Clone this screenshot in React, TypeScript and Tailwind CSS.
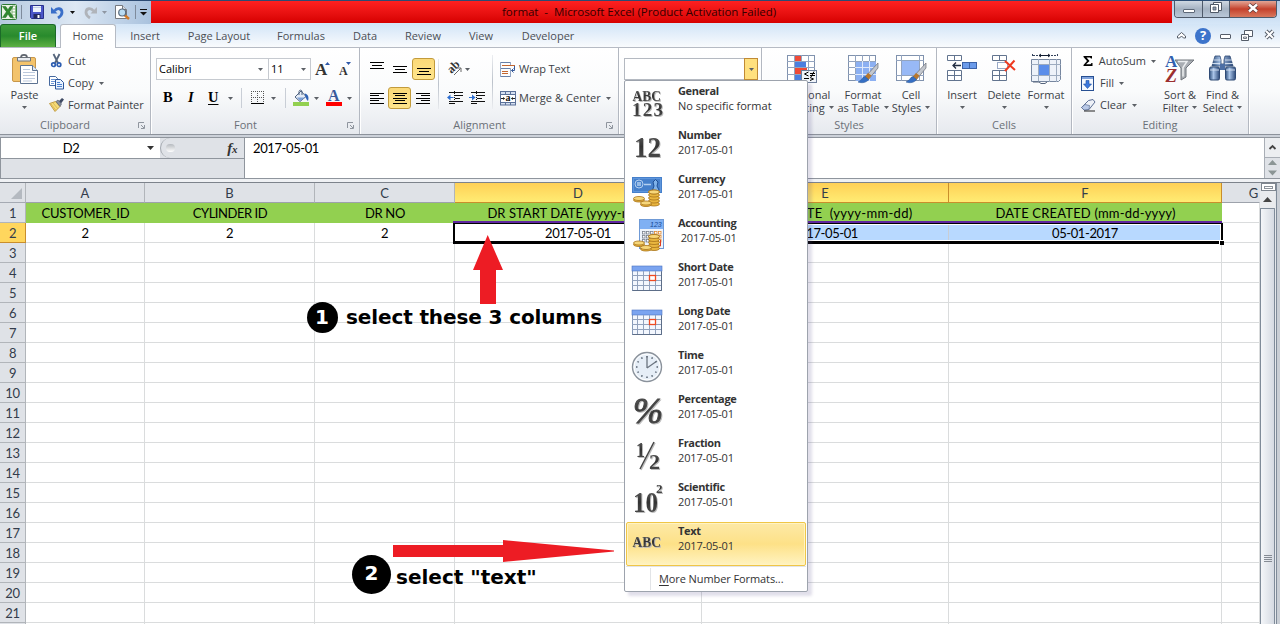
import React from "react";

type IconProps = { children: React.ReactNode; w: number; h: number; className?: string };

const Icon = ({ children, w, h, className = "" }: IconProps) => (
  <svg width={w} height={h} viewBox={`0 0 ${w} ${h}`} className={`block shrink-0 overflow-visible ${className}`}>
    {children}
  </svg>
);

const Arrow = ({ className = "" }: { className?: string }) => (
  <Icon w={5} h={3} className={className}>
    <path d="M0 0h5L2.500 3z" fill="#5c6066" />
  </Icon>
);

const Sep = ({ className = "" }: { className?: string }) => (
  <div className={`h-5 w-px shrink-0 bg-[#c9ced6] ${className}`} />
);

/* ---------- quick access + window icons ---------- */

const ExcelLogo = () => (
  <Icon w={16} h={16}>
    <rect x="0.500" y="0.500" width="15" height="15" rx="1" fill="#e9f3e3" stroke="#2d7a35" />
    <path d="M11 2h3.500v12H11z" fill="#fff" stroke="#5c9e55" strokeWidth="0.700" />
    <path d="M11 5h3.500M11 8h3.500M11 11h3.500" stroke="#5c9e55" strokeWidth="0.700" />
    <path d="M1.500 2.500h3.200L7 5.700l2-3.200h3L8.700 7.700 12.500 13.500H9.200L7 9.900l-2.200 3.600H1.500l3.900-5.800z" fill="#2f8a2c" stroke="#1c6524" strokeWidth="0.500" />
  </Icon>
);

const SaveIcon = () => (
  <Icon w={14} h={14}>
    <path d="M.500.500h13v13h-12l-1-1z" fill="#4a56c8" stroke="#28308c" />
    <rect x="3" y="1" width="8" height="6" fill="#eef3fb" />
    <path d="M3 2.500h8" stroke="#c3cfe4" />
    <rect x="3.500" y="9" width="7" height="4.500" fill="#23295f" />
    <rect x="7.500" y="10" width="2" height="3" fill="#fff" />
  </Icon>
);

const UndoIcon = ({ redo = false }: { redo?: boolean }) => (
  <Icon w={13} h={13}>
    <g transform={redo ? "translate(13 0) scale(-1 1)" : undefined}>
      <path
        d="M3.500 5C6 1.500 11 2 11 6.500c0 2.500-1.700 4-4 5.500"
        fill="none"
        stroke={redo ? "#b0b4ba" : "#3a6fc9"}
        strokeWidth="2.800"
      />
      <path d="M0 1v6.500h6.500z" fill={redo ? "#b0b4ba" : "#3a6fc9"} />
    </g>
  </Icon>
);

const PreviewIcon = () => (
  <Icon w={15} h={15}>
    <path d="M.500.500h7l4 4v9H.500z" fill="#fff" stroke="#75797f" />
    <path d="M7.500.500v4h4" fill="#dbe0e8" stroke="#75797f" />
    <path d="M9.500 10l4.500 4" stroke="#d27a26" strokeWidth="2.500" />
    <circle cx="7.200" cy="7.500" r="3.500" fill="#b9dcf3" stroke="#5a6a7c" strokeWidth="1.200" />
  </Icon>
);

/* ---------- ribbon icons ---------- */

const PasteIcon = () => (
  <Icon w={27} h={31}>
    <rect x="0.500" y="3.500" width="23" height="24" rx="1.500" fill="#f3c36c" stroke="#c8974a" />
    <path d="M5.500 3.500h13V7h-13z" fill="#e8ebef" stroke="#6e747c" />
    <path d="M9 3.500C9 0 15 0 15 3.500" fill="none" stroke="#5f656e" strokeWidth="1.700" />
    <path d="M8.500 11.500h12l5 5v13h-17z" fill="#fff" stroke="#5c7291" />
    <path d="M20.500 11.500v5h5" fill="#dfe8f4" stroke="#5c7291" />
    <path d="M11 15.500h7M11 18.500h12M11 21.500h12M11 24.500h12M11 27h9" stroke="#bcc9dc" />
  </Icon>
);

const CutIcon = () => (
  <Icon w={12} h={14}>
    <path d="M2.500 0L7 9M8.500 0L4 9" stroke="#55657c" strokeWidth="1.800" />
    <circle cx="2.500" cy="10.700" r="1.800" fill="none" stroke="#2c5db0" strokeWidth="1.700" />
    <circle cx="8" cy="10.700" r="1.800" fill="none" stroke="#2c5db0" strokeWidth="1.700" />
  </Icon>
);

const CopyIcon = () => (
  <Icon w={15} h={14}>
    <path d="M.500.500h6l2 2v7h-8z" fill="#fff" stroke="#46699f" />
    <path d="M2 3.500h4M2 5.500h4M2 7.500h3" stroke="#6b94d4" />
    <path d="M6.500 3.500h5l3 3v6.500h-8z" fill="#eaf2fd" stroke="#2d569a" />
    <path d="M8 6.500h3M8 8.500h5M8 10.500h5" stroke="#4d82d0" />
  </Icon>
);

const BrushIcon = () => (
  <Icon w={15} h={14}>
    <path d="M0.500 5.500L6.500 3.500l4.500 5L6 13.500z" fill="#f5dc7a" stroke="#b58a2b" strokeWidth="0.800" />
    <path d="M2 6l5 6.500M4 5l5 6" stroke="#d8b04a" strokeWidth="0.800" />
    <path d="M7 3.500l2-1.500 3.500 4-1.500 2.500z" fill="#8b93a3" stroke="#4b5263" strokeWidth="0.600" />
    <path d="M10 3L13 0l2 1.500L12 5.500z" fill="#3f4a63" />
  </Icon>
);

const GrowFont = ({ shrink = false }: { shrink?: boolean }) => (
  <Icon w={14} h={14}>
    <text x={shrink ? 0 : -1} y="13" fontFamily="Liberation Serif, serif" fontWeight="bold" fontSize={shrink ? 12 : 17} fill="#333">
      A
    </text>
    {shrink ? <path d="M7 0h5L9.500 3z" fill="#2e58a8" /> : <path d="M9 3h5L11.500 0z" fill="#2e58a8" />}
  </Icon>
);

const BorderIcon = () => (
  <Icon w={13} h={14}>
    <path d="M0 .500h13M0 6.500h13M.500 0v12M6.500 0v12M12.500 0v12" stroke="#555" strokeDasharray="1 1" />
    <path d="M0 12.500h13" stroke="#000" />
  </Icon>
);

const BucketIcon = () => (
  <Icon w={16} h={16}>
    <path d="M2 7L8 1l5 5.500-6 5z" fill="#e4ecf7" stroke="#4f6280" />
    <path d="M4 7.500h8L7.300 11z" fill="#7ca0d8" />
    <path d="M6 5V1.500c0-1.800 3-1.800 3 0V5" fill="none" stroke="#4f6280" />
    <path d="M11.500 3.500c4 .500 4.500 4 3.500 7.500-1.500-1-2.500-4-3.500-7.500z" fill="#2f62b5" />
    <rect y="12" width="16" height="4" fill="#92d050" />
  </Icon>
);

const FontColorIcon = () => (
  <Icon w={16} h={16}>
    <text x="2" y="11" fontFamily="Liberation Serif, serif" fontWeight="bold" fontSize="16" fill="#3a5b9b">
      A
    </text>
    <rect y="12" width="16" height="4" fill="#f00" />
  </Icon>
);

const Lines = ({ kind }: { kind: "top" | "middle" | "bottom" | "left" | "center" | "right" }) => {
  const bars: [number, number, number][] = {
    top: [[0, 0, 14], [2, 3, 10], [0, 6, 14]],
    middle: [[0, 4, 14], [2, 7, 10], [0, 10, 14]],
    bottom: [[0, 7, 14], [2, 10, 10], [0, 13, 14]],
    left: [[0, 0, 14], [0, 2, 9], [0, 5, 14], [0, 7, 9], [0, 10, 14]],
    center: [[0, 0, 14], [2, 2, 10], [0, 5, 14], [2, 7, 10], [0, 10, 14]],
    right: [[0, 0, 14], [5, 2, 9], [0, 5, 14], [5, 7, 9], [0, 10, 14]],
  }[kind] as [number, number, number][];
  return (
    <Icon w={14} h={14}>
      {bars.map(([x, y, w]) => (
        <rect key={y} x={x} y={y} width={w} height="1" fill="#000" />
      ))}
    </Icon>
  );
};

const OrientIcon = () => (
  <Icon w={15} h={14}>
    <text x="0" y="0" transform="translate(4.500 12) rotate(-45)" fontFamily="Liberation Serif, serif" fontWeight="bold" fontSize="12" fill="#333">
      ab
    </text>
    <path d="M7 13L13.500 6.500M14 6v4M14 6h-4" stroke="#666" fill="none" />
  </Icon>
);

const IndentIcon = ({ inc = false }: { inc?: boolean }) => (
  <Icon w={16} h={14}>
    <path d="M2 1.500h14M8 4.500h8M8 7.500h5M2 10.500h14M2 12.500h5" stroke="#111" strokeWidth="1.200" />
    <path d="M7.500 0v14" stroke="#111" strokeDasharray="1 1" />
    <path d={inc ? "M0 6h3V3.500L6.500 6.500 3 9.500V7H0z" : "M6.500 6h-3V3.500L0 6.500l3.500 3V7h3z"} fill="#2f6fd0" />
  </Icon>
);

const WrapIcon = () => (
  <Icon w={16} h={15}>
    <path d="M0 .500h11M0 6.500h11M0 14.500h11" stroke="#6780a8" />
    <path d="M.500 0v15M10.500 0v3M10.500 6v9" stroke="#93a6c4" />
    <path d="M2 3.500h13M2 9.500h6M2 11.500h6" stroke="#c4662f" strokeWidth="1.200" />
    <path d="M14.500 4v4.500h-3M13.500 6.500l-2 2 2 2" stroke="#355a9a" fill="none" />
  </Icon>
);

const MergeIcon = () => (
  <Icon w={16} h={15}>
    <rect x="0.500" y="0.500" width="15" height="13.500" fill="#d5e0f1" stroke="#5b7199" />
    <path d="M0 3.500h16M0 11.500h16M5.500 0v3M10.500 0v3M5.500 11v3M10.500 11v3" stroke="#5b7199" />
    <rect x="1" y="4" width="14" height="7" fill="#fff" />
    <path d="M1 7.500h3.500M15 7.500h-3.500" stroke="#222" />
    <path d="M3 6v3l2-1.500zM13 6v3l-2-1.500z" fill="#222" />
    <text x="5.600" y="10.300" fontFamily="Liberation Serif, serif" fontWeight="bold" fontSize="10" fill="#111">
      a
    </text>
  </Icon>
);

const GridBase = () => (
  <>
    <rect x="0.500" y="0.500" width="27" height="25" fill="#fff" stroke="#8092ae" />
    <path d="M0 6.500h28M0 12.500h28M0 19.500h28M7.500 0v26M14.500 0v26M21.500 0v26" stroke="#93a4bf" />
  </>
);

const CondIcon = () => (
  <Icon w={29} h={29}>
    <GridBase />
    <rect x="8" y="1" width="6" height="5" fill="#ef4a37" />
    <rect x="8" y="7" width="11" height="5" fill="#4b7fe0" />
    <rect x="8" y="13" width="12" height="6" fill="#ef4a37" />
    <rect x="8" y="20" width="6" height="5" fill="#4b7fe0" />
    <rect x="14.500" y="15.500" width="15" height="12" fill="#f1f5fb" stroke="#6e7f9b" />
    <path d="M21.500 17l-4 2 4 2M17 23.500h5M23 18.500h5M23 20.500h5M27 16.500l-3 5.500M23 22.500l3.500 1.500-3.500 1.500" stroke="#000" fill="none" />
  </Icon>
);

const PaintBrush = () => (
  <>
    <path d="M30 8L17 22l3.500 2.500L30 13z" fill="#c3c7ce" stroke="#686d76" strokeWidth="0.700" />
    <path d="M20 18l-3 3.500 3.500 3 3-4z" fill="#b8772d" />
    <path d="M17 21.500c-3 .500-3 4-7 5.500 4 1.500 9 .500 10.500-2.500z" fill="#356fc4" stroke="#23508f" strokeWidth="0.500" />
  </>
);

const FormatTableIcon = () => (
  <Icon w={30} h={29}>
    <GridBase />
    <rect x="8" y="7" width="20" height="19" fill="#8cb0f2" />
    <path d="M7 12.500h21M7 19.500h21M14.500 6v20M21.500 6v20" stroke="#dfe9fa" />
    <PaintBrush />
  </Icon>
);

const CellStylesIcon = () => (
  <Icon w={30} h={29}>
    <rect x="0.500" y="0.500" width="27" height="25" fill="#fff" stroke="#8092ae" />
    <path d="M0 5.500h28M0 20.500h28M5.500 0v26M23.500 0v26" stroke="#93a4bf" />
    <rect x="6" y="6" width="17" height="14" fill="#98b9f6" />
    <PaintBrush />
  </Icon>
);

const InsertIcon = () => (
  <Icon w={30} h={27}>
    <g fill="#fff" stroke="#62748f">
      <path d="M.500.500h14v5H.500zM7.500.500v5M.500 15.500h14v10H.500zM.500 20.500h14M7.500 15.500v10" />
      <rect x="15.500" y="7.500" width="14" height="6" fill="#6b9bea" stroke="#3b62a8" />
      <path d="M22.500 7.500v6" stroke="#3b62a8" />
    </g>
    <path d="M6 10.500h8M9 7.500l-3 3 3 3" stroke="#222d42" fill="none" strokeWidth="1.300" />
  </Icon>
);

const DeleteIcon = () => (
  <Icon w={25} h={27}>
    <g fill="#fff" stroke="#62748f">
      <path d="M.500.500h14v5H.500zM7.500.500v5M.500 15.500h14v10H.500zM.500 20.500h14M7.500 15.500v10" />
      <rect x="5.500" y="7.500" width="10" height="6" strokeDasharray="1 1" stroke="#35558f" />
    </g>
    <path d="M13 6l10 9M22.500 5.500L13 16" stroke="#ee3a20" strokeWidth="2" />
  </Icon>
);

const FormatCellsIcon = () => (
  <Icon w={31} h={30}>
    <path d="M1.500 0v3M26.500 0v3M2 1.500h25" stroke="#34435c" strokeDasharray="2 1" />
    <path d="M8 1.500h11M10 0L8 1.500l2 1.500M17 0l2 1.500-2 1.500" stroke="#111c30" fill="none" />
    <path d="M.500 5.500h29v20l-2 2H.500z" fill="#edf2f9" stroke="#76869f" />
    <path d="M0 10.500h30M0 21.500h30M7.500 5v23M18.500 5v23M25.500 5v23" stroke="#9cabbf" />
    <rect x="8" y="11" width="10" height="10" fill="#5b8eea" />
    <path d="M2 28h6l2 1.500h4l2-1.500" stroke="#56657d" fill="none" />
  </Icon>
);

const SigmaIcon = () => (
  <Icon w={10} h={10}>
    <path d="M.500 0h8.500v2.500H8L7 1.500H3.500L6.500 5l-3.500 3.300h4.500l1-1.300h1V10H.500V9L4 5 .500 1z" fill="#000" />
  </Icon>
);

const FillIcon = () => (
  <Icon w={13} h={15}>
    <rect x="0.500" y="0.500" width="12" height="14" fill="#f5f9ff" stroke="#274f92" />
    <path d="M1 2h11" stroke="#7fa2dc" strokeWidth="2" />
    <path d="M5 4.500h3V8h2.500l-4 4.500-4-4.500H5z" fill="#3c78de" stroke="#1d4f9e" strokeWidth="0.600" />
  </Icon>
);

const EraserIcon = () => (
  <Icon w={15} h={13}>
    <path d="M.500 8.500L7.500 1.500 12 .500 14 3 8 10.500l-5 .500z" fill="#eef1f7" stroke="#5c6f94" />
    <path d="M.500 8.500L4 5.500l4.500 1-.500 4-5 .500z" fill="#b9c9e8" stroke="#5c6f94" strokeWidth="0.700" />
    <path d="M3 12h11" stroke="#222" />
  </Icon>
);

const SortIcon = () => (
  <Icon w={30} h={30}>
    <path d="M10 6h19l-8 8v9l-5 3V14z" fill="#a9adb3" stroke="#71767d" />
    <path d="M13 7.500h9l-4 6v9" fill="none" stroke="#eceef0" strokeWidth="1.500" />
    <text x="0" y="13" fontFamily="Liberation Serif, serif" fontWeight="bold" fontSize="17" fill="#315fae">
      A
    </text>
    <text x="0.500" y="28" fontFamily="Liberation Serif, serif" fontWeight="bold" fontStyle="italic" fontSize="19" fill="#9b2f30">
      Z
    </text>
  </Icon>
);

const BinocularsIcon = () => (
  <Icon w={28} h={26}>
    <defs>
      <linearGradient id="bino" x1="0" x2="1" y1="0" y2="0">
        <stop offset="0" stopColor="#31527f" />
        <stop offset=".4" stopColor="#a9c4e8" />
        <stop offset="1" stopColor="#2e4b7a" />
      </linearGradient>
    </defs>
    <path d="M6 1h5l1 4v4h3V5l1-4h5l3 10H3z" fill="url(#bino)" stroke="#2f4a75" strokeWidth="0.800" />
    <rect x="0.500" y="12" width="10" height="13" rx="1.500" fill="url(#bino)" stroke="#2f4a75" />
    <rect x="16.500" y="12" width="10" height="13" rx="1.500" fill="url(#bino)" stroke="#2f4a75" />
    <rect x="11" y="9" width="5" height="6" fill="#4d6fa5" />
    <path d="M4.500 5h7M16 5h7M3 8.500h8M16 8.500h8M1 15h9M17 15h9" stroke="#dbe6f5" strokeWidth="0.900" />
  </Icon>
);

/* ---------- ribbon building blocks ---------- */

const Launcher = () => (
  <Icon w={7} h={7} className="absolute right-[5px] top-[4px]">
    <path d="M.500 6V.500H6M3 3l3 3M6.500 3v3.500H3" stroke="#8f959e" fill="none" />
  </Icon>
);

type GroupProps = { title: string; className: string; launcher?: boolean; children?: React.ReactNode; titleClass?: string };
const Group = ({ title, className, launcher, children, titleClass = "" }: GroupProps) => (
  <section className={`flex h-[86px] shrink-0 flex-col border-r border-[#b3b8c1] shadow-[1px_0_0_#fff] ${className}`}>
    <div className="flex h-[70px]">{children}</div>
    <div className={`relative h-4 text-center leading-[14px] text-[#6a7077] ${titleClass}`}>
      {title}
      {launcher && <Launcher />}
    </div>
  </section>
);

type BigProps = { icon: React.ReactNode; l1: string; l2?: string; className: string };
const Big = ({ icon, l1, l2, className }: BigProps) => (
  <div className={`flex shrink-0 flex-col items-center whitespace-nowrap leading-[13px] ${className}`}>
    <div className="flex h-[40px] pt-[7px]">{icon}</div>
    <div>{l1}</div>
    <div className="flex h-[13px] items-center gap-[4px]">
      {l2}
      <Arrow />
    </div>
  </div>
);

const Small = ({ icon, label, arrow }: { icon: React.ReactNode; label: string; arrow?: boolean }) => (
  <div className="flex h-[22px] items-center whitespace-nowrap">
    <div className="flex w-[19px] justify-start">{icon}</div>
    {label}
    {arrow && <Arrow className="ml-[5px]" />}
  </div>
);

const activeBtn =
  "flex h-[22px] w-[23px] shrink-0 items-center justify-center rounded-[3px] border border-[#c29b3c] bg-linear-to-b from-[#fbd978] to-[#ffe58b]";

/* ---------- number format menu ---------- */

const Glyph = ({ children }: { children: React.ReactNode }) => (
  <Icon w={32} h={34}>
    <defs>
      <linearGradient id="ink" x1="0" x2="0" y1="0" y2="1">
        <stop offset="0" stopColor="#6a6a6a" />
        <stop offset=".5" stopColor="#333" />
        <stop offset="1" stopColor="#555" />
      </linearGradient>
    </defs>
    <g fill="url(#ink)" fontFamily="Liberation Serif, serif" fontWeight="bold" className="drop-shadow-[1px_1px_0.500px_#bbb]">
      {children}
    </g>
  </Icon>
);

const Coins = ({ x, y }: { x: number; y: number }) => (
  <g transform={`translate(${x} ${y})`} fill="#e9b63f" stroke="#a8741a" strokeWidth="0.800">
    {[12, 9, 6, 3, 0].map((d) => (
      <ellipse key={d} cx="22" cy={d + 1.5} rx="5.500" ry="2" />
    ))}
    <ellipse cx="7" cy="9.500" rx="5.500" ry="2" />
    <ellipse cx="7" cy="8" rx="5.500" ry="2" fill="#f7d77a" />
    <ellipse cx="14" cy="14" rx="5.500" ry="2" />
    <ellipse cx="14" cy="12.500" rx="5.500" ry="2" fill="#f7d77a" />
    <ellipse cx="22" cy="1.500" rx="5.500" ry="2" fill="#f7d77a" />
  </g>
);

const CurrencyIcon = () => (
  <Icon w={32} h={34}>
    <rect x="0" y="5" width="30" height="16" fill="#4680cb" />
    <rect x="1.500" y="6.500" width="27" height="13" fill="none" stroke="#5f96dc" />
    <circle cx="7" cy="12" r="4" fill="none" stroke="#b4d0f0" />
    <path d="M6 10v4M8 10v4M12 12.500h7" stroke="#b4d0f0" strokeWidth="1.500" />
    <path d="M20.500 18l1.500-4-1-4 2.500-2.500L26 10l-1 4 2 4" fill="#7fb2ea" stroke="#1f4f96" />
    <Coins x={0} y={18.5} />
  </Icon>
);

const AccountingIcon = () => (
  <Icon w={32} h={34} className="mt-[2px]">
    <rect x="7.500" y="1.500" width="24" height="29" fill="#eef4fc" stroke="#6f9ad6" />
    <rect x="8" y="2" width="23" height="9" fill="#7fb0f3" />
    <text x="18" y="9" fontFamily="Liberation Sans, sans-serif" fontStyle="italic" fontSize="7" fill="#174a96">
      123
    </text>
    <g fill="#fff" stroke="#7a828e" strokeWidth="0.800">
      {[13.5, 17.5, 21.5].map((y) =>
        [10.5, 14.5, 18.5, 22.5, 26.5].map((x) => (
          <rect key={`${x}-${y}`} x={x} y={y} width="2.500" height="2.500" stroke={x > 20 ? "#e08a30" : "#7a828e"} />
        ))
      )}
    </g>
    <path d="M28.500 22v6h-3" stroke="#e03c20" fill="none" />
    <Coins x={0} y={17} />
  </Icon>
);

const CalendarIcon = () => (
  <Icon w={32} h={34}>
    <rect x="0.500" y="6.500" width="29" height="24" fill="#f3f7fe" stroke="#8599b8" />
    <rect x="0" y="6" width="30" height="5" fill="#7ba4f0" stroke="#4a72c0" strokeWidth="0.600" />
    <path d="M0 15.500h30M0 20.500h30M0 25.500h30M5.500 11v19M11.500 11v19M17.500 11v19M23.500 11v19" stroke="#92a2bd" />
    <rect x="17.500" y="15.500" width="6" height="5" fill="#fff" stroke="#ee4a22" strokeWidth="1.300" />
    <path d="M.500 30.500h29v-19" stroke="#5d6e88" fill="none" />
  </Icon>
);

const ClockIcon = () => (
  <Icon w={32} h={34}>
    <circle cx="15" cy="19" r="14.500" fill="#e6eef7" stroke="#8b929b" strokeWidth="1.400" />
    <circle cx="15" cy="19" r="13" fill="none" stroke="#fff" />
    {[0, 30, 60, 90, 120, 150, 180, 210, 240, 270, 300, 330].map((a) => (
      <rect key={a} x="14.300" y="8" width="1.400" height="1.500" fill="#4d5866" transform={`rotate(${a} 15 19)`} />
    ))}
    <path d="M15 8v12M15 20l10-7" stroke="#6c7580" strokeWidth="1.300" />
  </Icon>
);

const formats: { name: string; sample: string; icon: React.ReactNode }[] = [
  {
    name: "General",
    sample: "No specific format",
    icon: (
      <Glyph>
        <text x="0.500" y="17" fontSize="15" textLength="28.500" lengthAdjust="spacingAndGlyphs">ABC</text>
        <text x="0" y="31.500" fontSize="19" textLength="31">123</text>
      </Glyph>
    ),
  },
  { name: "Number", sample: "2017-05-01", icon: <Glyph><text x="2" y="29" fontSize="30" textLength="27" lengthAdjust="spacingAndGlyphs">12</text></Glyph> },
  { name: "Currency", sample: "2017-05-01", icon: <CurrencyIcon /> },
  { name: "Accounting", sample: "\u00a02017-05-01", icon: <AccountingIcon /> },
  { name: "Short Date", sample: "2017-05-01", icon: <CalendarIcon /> },
  { name: "Long Date", sample: "2017-05-01", icon: <CalendarIcon /> },
  { name: "Time", sample: "2017-05-01", icon: <ClockIcon /> },
  {
    name: "Percentage",
    sample: "2017-05-01",
    icon: (
      <Glyph>
        <text x="1" y="31" fontSize="35" fontWeight="normal" fontStyle="italic" stroke="#444" strokeWidth="0.900" textLength="30" lengthAdjust="spacingAndGlyphs">
          %
        </text>
      </Glyph>
    ),
  },
  {
    name: "Fraction",
    sample: "2017-05-01",
    icon: (
      <Glyph>
        <text x="4" y="20.500" fontSize="21" textLength="9" lengthAdjust="spacingAndGlyphs">1</text>
        <text x="17" y="33" fontSize="22">2</text>
        <path d="M22 6L8 33" stroke="#444" strokeWidth="1.500" />
      </Glyph>
    ),
  },
  {
    name: "Scientific",
    sample: "2017-05-01",
    icon: (
      <Glyph>
        <text x="1" y="32" fontSize="29" textLength="25" lengthAdjust="spacingAndGlyphs">10</text>
        <text x="24" y="13" fontSize="13">2</text>
      </Glyph>
    ),
  },
  { name: "Text", sample: "2017-05-01", icon: <Glyph><text x="0.500" y="22.500" fontSize="15" textLength="28.500" lengthAdjust="spacingAndGlyphs">ABC</text></Glyph> },
];

const FormatMenu = () => (
  <div className="absolute left-[624px] top-[80px] flex h-[512px] w-[184px] flex-col rounded-[2px] border border-[#9da3ad] bg-white px-px pt-px text-[#333] shadow-[4px_4px_3px_rgba(90,80,140,0.18)]">
    {formats.map((f) => (
      <div
        key={f.name}
        className={
          f.name === "Text"
            ? "flex h-[44px] rounded-[2px] border border-[#f0c646] bg-linear-to-b from-[#fde9a6] via-[#fde187] to-[#fff3c0] pl-[5px] shadow-[inset_0_0_0_1px_#fff3c4]"
            : "flex h-[44px] border border-transparent pl-[5px]"
        }
      >
        <div className="w-[46px] pt-px">{f.icon}</div>
        <div className="whitespace-pre leading-[15px]">
          <div className="font-bold tracking-[-0.350px]">{f.name}</div>
          <div className={f.name === "General" ? "" : "tracking-[-0.150px]"}>{f.sample}</div>
        </div>
      </div>
    ))}
    <div className="flex h-[24px] border-t border-[#e2e4e7]">
      <div className="mt-px w-[25px] border-r border-[#e2e4e7]" />
      <div className="pl-[8px] pt-px leading-[22px] tracking-[-0.090px]">
        <span className="underline underline-offset-2">M</span>ore Number Formats...
      </div>
    </div>
  </div>
);

/* ---------- sheet ---------- */

const columns: { id: string; w: string; head: React.ReactNode; value: string; track: string }[] = [
  { id: "A", w: "w-[119px]", head: "CUSTOMER_ID", value: "2", track: "tracking-[-0.200px]" },
  { id: "B", w: "w-[170px]", head: "CYLINDER ID", value: "2", track: "tracking-[-0.450px]" },
  { id: "C", w: "w-[140px]", head: "DR NO", value: "2", track: "tracking-[-0.300px]" },
  {
    id: "D",
    w: "w-[247px]",
    head: (
      <>
        DR START DATE (yyyy-<span className="tracking-[0.600px]">mm-dd)</span>
      </>
    ),
    value: "2017-05-01",
    track: "tracking-[0.040px]",
  },
  {
    id: "E",
    w: "w-[247px]",
    head: (
      <>
        DR END DA<span className="tracking-[0.300px]">TE  (yyyy-mm-dd)</span>
      </>
    ),
    value: "2017-05-01",
    track: "tracking-[-0.250px]",
  },
  { id: "F", w: "w-[273px]", head: "DATE CREATED (mm-dd-yyyy)", value: "05-01-2017", track: "tracking-[0.180px]" },
  { id: "G", w: "w-[38px]", head: "", value: "", track: "" },
];
const isSelected = (id: string) => id === "D" || id === "E" || id === "F";

const Sheet = () => (
  <div className="relative w-[1260px] shrink-0 overflow-hidden font-[Lato,sans-serif] text-[13px] text-black">
    <div className="flex h-[20px] text-[#333c4b]">
      <div className="flex w-[26px] shrink-0 items-end justify-end border-b border-r border-b-[#a5aab3] border-r-[#b1b5ba] bg-[#dfe2e7] p-[3px]">
        <Icon w={11} h={11}>
          <path d="M11 0v11H0z" fill="#b4b9c0" />
        </Icon>
      </div>
      {columns.map((c) => (
        <div
          key={c.id}
          className={`shrink-0 border-b border-r text-center leading-[20px] ${c.w} ${
            isSelected(c.id)
              ? "border-[#c98e2c] bg-linear-to-b from-[#ffd056] to-[#ffec73]"
              : c.id === "G"
                ? "border-b-[#9da2ab] border-r-transparent bg-[#dfe2e7] pl-[26px]"
                : "border-b-[#9da2ab] border-r-[#b1b5ba] bg-[#dfe2e7]"
          }`}
        >
          {c.id}
        </div>
      ))}
    </div>
    {Array.from({ length: 22 }, (_, r) => (
      <div key={r} className="flex h-[20px]">
        <div
          className={`w-[26px] shrink-0 border-b border-r text-center leading-[20px] tracking-[-0.300px] text-[#333c4b] ${
            r === 1 ? "border-[#c98e2c] bg-[#ffd65d]" : "border-[#b1b5ba] bg-[#dfe2e7]"
          }`}
        >
          {r < 21 ? r + 1 : ""}
        </div>
        {columns.map((c) => (
          <div
            key={c.id}
            className={`shrink-0 overflow-hidden whitespace-pre text-center leading-[21px] ${c.w} ${
              r === 0 && c.id !== "G"
                ? "bg-[#92d050]"
                : r === 1 && (c.id === "E" || c.id === "F")
                  ? "border-b border-r border-[#c9cdd3] bg-[#b8d9ff]"
                  : "border-b border-r border-[#dadcdd]"
            } ${r === 0 ? c.track : "tracking-[-0.400px]"}`}
          >
            {r === 0 ? c.head : r === 1 ? c.value : ""}
          </div>
        ))}
      </div>
    ))}
    <div className="absolute left-[453px] top-[38px] h-[2px] w-[769px] bg-[#5f26a0]" />
    <div className="absolute left-[453px] top-[40px] h-[21px] w-[770px] border-2 border-b-3 border-t-1 border-black" />
    <div className="absolute left-[455px] top-[41px] h-[17px] w-[766px] border border-white" />
    <div className="absolute left-[1219px] top-[57px] h-[5px] w-[5px] border-l border-t border-white bg-black" />
  </div>
);

const Steps = () => (
  <>
    <svg className="absolute left-[472px] top-[235px]" width="32" height="70" viewBox="0 0 32 70">
      <path d="M15.700 0L31 35h-7v34H8V35H1z" fill="#ed1c24" />
    </svg>
    <div className="absolute left-[307px] top-[302px] flex h-[31px] w-[31px] items-center justify-center rounded-full bg-black pb-[2px] pr-px font-['DejaVu_Sans',sans-serif] text-[20px] font-bold leading-none text-white">
      1
    </div>
    <div className="absolute left-[346px] top-[304px] whitespace-nowrap font-['DejaVu_Sans',sans-serif] text-[20px] font-bold leading-[26px] tracking-[-0.120px] text-black">
      select these 3 columns
    </div>
    <svg className="absolute left-[393px] top-[540px]" width="222" height="22" viewBox="0 0 222 22">
      <path d="M0 5h110V0l111 10.500v1L110 22v-5H0z" fill="#ed1c24" />
    </svg>
    <div className="absolute left-[352px] top-[555px] flex h-[39px] w-[39px] items-center justify-center rounded-full bg-black pb-[3px] font-['DejaVu_Sans',sans-serif] text-[20px] font-bold leading-none text-white">
      2
    </div>
    <div className="absolute left-[396px] top-[564px] whitespace-nowrap font-['DejaVu_Sans',sans-serif] text-[20px] font-bold leading-[26px] text-black">
      select "text"
    </div>
  </>
);

/* ---------- page ---------- */

const TitleBar = () => (
  <header className="flex h-[24px] border-t border-[#2c4b73] bg-linear-to-b from-[#b3cae6] to-[#d6e7f8]">
    <div className="flex w-[151px] shrink-0 items-center bg-linear-to-r from-[#b5c9df] via-[#dde8f4] to-[#a9c2de] pb-px pl-px">
      <ExcelLogo />
      <div className="ml-[4px] mr-[8px] h-[14px] w-px bg-[#7e8b9c]" />
      <SaveIcon />
      <div className="ml-[7px]"><UndoIcon /></div>
      <Icon w={5} h={3} className="ml-[6px] mr-[9px]"><path d="M0 0h5L2.500 3z" fill="#111" /></Icon>
      <UndoIcon redo />
      <Icon w={5} h={3} className="ml-[5px] mr-[8px]"><path d="M0 0h5L2.500 3z" fill="#8e96a2" /></Icon>
      <PreviewIcon />
      <div className="ml-[5px] mr-[4px] h-[14px] w-px shrink-0 bg-[#7e8b9c]" />
      <Icon w={7} h={7}><path d="M0 .500h7" stroke="#111" /><path d="M0 3h7L3.500 6.500z" fill="#111" /></Icon>
    </div>
    <div className="h-[22px] w-[1021px] shrink-0 whitespace-pre bg-linear-to-b from-[#ff2020] to-[#d60000] text-[11.500px] leading-[21px] text-[#300]">
      <span className="block pl-[351px] tracking-[-0.030px]">format  -  Microsoft Excel (Product Activation Failed)</span>
    </div>
    <div className="ml-[2px] flex h-[17px] w-[103px] overflow-hidden rounded-b-[4px] border border-t-0 border-[#4e5a6a]">
      <div className="flex w-[28px] items-center justify-center border-r border-[#4e5a6a] bg-linear-to-b from-[#cfd8e2] via-[#a5b2c2] to-[#b9c7d8]">
        <div className="mt-[3px] h-[4px] w-[12px] rounded-[1px] border border-[#5d6878] bg-white" />
      </div>
      <div className="flex w-[27px] items-center justify-center border-r border-[#4e5a6a] bg-linear-to-b from-[#cfd8e2] via-[#a5b2c2] to-[#b9c7d8] pb-[4px]">
        <Icon w={12} h={11}>
          <path d="M3.500.500h8v8h-8z" fill="#fff" stroke="#4f5967" />
          <path d="M.500 2.500h8v8h-8z" fill="#fff" stroke="#4f5967" />
          <path d="M3 5h3v3H3z" fill="#8d9aab" stroke="#4f5967" strokeWidth="0.800" />
        </Icon>
      </div>
      <div className="flex flex-1 items-center justify-center bg-linear-to-b from-[#e2a596] via-[#c4402c] to-[#d8765c] pb-[2px]">
        <Icon w={12} h={10}>
          <path d="M2 1.500l8 7M10 1.500l-8 7" stroke="#5d3b3b" strokeWidth="4" />
          <path d="M2 1.500l8 7M10 1.500l-8 7" stroke="#fff" strokeWidth="2.400" />
        </Icon>
      </div>
    </div>
  </header>
);

const TabBar = () => (
  <nav className="flex h-[24px] border-b border-[#b6bbc4] bg-linear-to-b from-[#d3e5f7] to-[#f9fbfd] text-[#4c4f55]">
    <div className="w-[56px] rounded-t-[3px] border border-b-0 border-[#1b6a28] bg-linear-to-b from-[#3f9b3c] via-[#288a2c] to-[#5cb043] text-center font-semibold leading-[22px] text-white">
      File
    </div>
    <div className="ml-[4px] h-[24px] w-[56px] rounded-t-[3px] border border-b-0 border-[#b6bbc4] bg-white text-center leading-[22px]">
      Home
    </div>
    <div className="w-[58px] text-center leading-[24px]">Insert</div>
    <div className="w-[90px] text-center leading-[24px]">Page Layout</div>
    <div className="w-[74px] text-center leading-[24px]">Formulas</div>
    <div className="w-[54px] text-center leading-[24px]">Data</div>
    <div className="w-[62px] text-center leading-[24px]">Review</div>
    <div className="w-[54px] text-center leading-[24px]">View</div>
    <div className="w-[80px] text-center leading-[24px]">Developer</div>
    <div className="ml-auto flex items-center pr-[5px]">
      <Icon w={9} h={7} className="mr-[9px]">
        <path d="M.500 4l4-3.500 4 3.500v2h-2l-2-2-2 2h-2z" fill="#fff" stroke="#555d69" />
      </Icon>
      <div className="mr-[9px] flex h-[16px] w-[16px] items-center justify-center rounded-full bg-[#3d74cb] text-[13px] font-bold text-white">?</div>
      <div className="mr-[10px] mt-[2px] h-[5px] w-[11px] rounded-[1px] border border-[#555d69] bg-white" />
      <Icon w={12} h={11} className="mr-[11px]">
        <path d="M3.500.500h8v6h-8z" fill="#fff" stroke="#555d69" />
        <path d="M.500 4.500h7v6h-7z" fill="#fff" stroke="#555d69" />
        <path d="M2.500 7h3v1.500h-3z" fill="none" stroke="#555d69" strokeWidth="0.800" />
      </Icon>
      <Icon w={11} h={9} className="mb-[2px]">
        <path d="M2 1l7 7M9 1L2 8" stroke="#555d69" strokeWidth="4" />
        <path d="M2 1l7 7M9 1L2 8" stroke="#fff" strokeWidth="2" />
      </Icon>
    </div>
  </nav>
);

const Ribbon = () => (
  <div className="flex h-[86px] bg-linear-to-b from-white via-[#fafbfc] to-[#e6e9ee] text-[#3b3f46]">
    <Group title="Clipboard" className="w-[151px]" titleClass="pr-[20px]" launcher>
      <Big icon={<div className="-mt-px pl-[2px]"><PasteIcon /></div>} l1="Paste" className="w-[49px]" />
      <div className="pt-[2px]">
        <Small icon={<div className="pl-[2px]"><CutIcon /></div>} label="Cut" />
        <Small icon={<CopyIcon />} label="Copy" arrow />
        <div className="tracking-[-0.080px]">
          <Small icon={<BrushIcon />} label="Format Painter" />
        </div>
      </div>
    </Group>

    <Group title="Font" className="w-[209px]" titleClass="pr-[19px]" launcher>
      <div className="flex flex-col gap-[7px] pl-[5px] pt-[10px]">
        <div className="flex h-[22px] text-black">
          <div className="flex w-[113px] items-center justify-between border border-[#c6cad0] bg-white pl-[2px] pr-[5px]">
            Calibri <Arrow />
          </div>
          <div className="-ml-px flex w-[43px] items-center justify-between border border-[#c6cad0] bg-white pl-[2px] pr-[4px]">
            11 <Arrow />
          </div>
          <div className="pl-[5px] pt-[4px]"><GrowFont /></div>
          <div className="pl-[9px] pt-[4px]"><GrowFont shrink /></div>
        </div>
        <div className="flex h-[22px] items-center font-['Liberation_Serif',serif] text-[14.500px] font-bold text-black">
          <div className="w-[25px] pl-[7px]">B</div>
          <div className="w-[22px] pl-[7px] italic">I</div>
          <div className="w-[25px] pl-[5px] underline underline-offset-2">U</div>
          <Arrow className="mr-[8px]" />
          <Sep className="mr-[9px]" />
          <BorderIcon />
          <Arrow className="ml-[7px] mr-[9px]" />
          <Sep className="mr-[7px]" />
          <BucketIcon />
          <Arrow className="ml-[5px] mr-[7px]" />
          <FontColorIcon />
          <Arrow className="ml-[5px]" />
        </div>
      </div>
    </Group>

    <Group title="Alignment" className="w-[259px]" titleClass="pr-[19px]" launcher>
      <div className="flex flex-col gap-[7px] pt-[10px]">
        <div className="flex h-[22px] items-center">
          <div className="w-[33px] pl-[10px]"><Lines kind="top" /></div>
          <div className="w-[19px]"><Lines kind="middle" /></div>
          <div className={activeBtn}><div className="-mt-[2px]"><Lines kind="bottom" /></div></div>
        </div>
        <div className="flex h-[22px] items-center">
          <div className="w-[28px] pl-[10px] pt-[3px]"><Lines kind="left" /></div>
          <div className={activeBtn}><div className="pt-[3px]"><Lines kind="center" /></div></div>
          <div className="pl-[5px] pt-[3px]"><Lines kind="right" /></div>
        </div>
      </div>
      <div className="ml-[3px] mt-[11px] h-[50px] w-px bg-linear-to-b from-[#e8eaee] via-[#bcc2cb] to-[#e8eaee]" />
      <div className="flex w-[53px] flex-col gap-[7px] pl-[8px] pt-[10px]">
        <div className="flex h-[22px] items-center"><OrientIcon /><Arrow className="ml-[3px]" /></div>
        <div className="flex h-[22px] items-center gap-[6px]"><IndentIcon /><IndentIcon inc /></div>
      </div>
      <div className="mt-[7px] h-[54px] w-px bg-linear-to-b from-[#eceef1] via-[#bcc2cb] to-[#eceef1]" />
      <div className="flex flex-col gap-[7px] whitespace-nowrap pl-[7px] pt-[10px]">
        <div className="flex h-[22px] items-center gap-[3px] tracking-[-0.150px]"><WrapIcon />Wrap Text</div>
        <div className="flex h-[22px] items-center gap-[3px] tracking-[0.060px]"><MergeIcon />Merge &amp; Center<Arrow className="ml-[2px]" /></div>
      </div>
    </Group>

    <Group title="Number" className="w-[143px]">
      <div className="ml-[5px] mt-[10px] flex h-[22px] w-[134px] border border-[#b4b9c1] bg-white">
        <div className="-my-px -mr-px ml-auto flex w-[14px] items-center justify-center border border-[#c08a35] bg-[#ffe07e]">
          <Arrow />
        </div>
      </div>
    </Group>

    <Group title="Styles" className="w-[175px]">
      <Big icon={<CondIcon />} l1="Conditional" l2="Formatting" className="ml-px w-[76px]" />
      <Big icon={<FormatTableIcon />} l1="Format" l2="as Table" className="w-[48px]" />
      <Big icon={<CellStylesIcon />} l1="Cell" l2="Styles" className="w-[48px]" />
    </Group>

    <Group title="Cells" className="w-[135px]">
      <Big icon={<InsertIcon />} l1="Insert" className="ml-[4px] w-[42px]" />
      <Big icon={<DeleteIcon />} l1="Delete" className="w-[42px]" />
      <Big icon={<div className="-mt-px"><FormatCellsIcon /></div>} l1="Format" className="w-[42px]" />
    </Group>

    <Group title="Editing" className="w-[177px]">
      <div className="w-[84px] pl-[9px] pt-[2px]">
        <Small icon={<div className="pl-[2px]"><SigmaIcon /></div>} label="AutoSum" arrow />
        <Small icon={<FillIcon />} label="Fill" arrow />
        <Small icon={<EraserIcon />} label="Clear" arrow />
      </div>
      <Big icon={<div className="-mt-px"><SortIcon /></div>} l1="Sort &" l2="Filter" className="w-[48px]" />
      <Big icon={<BinocularsIcon />} l1="Find &" l2="Select" className="w-[37px]" />
    </Group>
  </div>
);

const FormulaBar = () => (
  <div className="flex h-[42px] border-b border-t border-[#8f959d] bg-[#dfe2e7] font-[Lato,sans-serif] text-[13px] tracking-[-0.400px] text-black">
    <div className="w-[245px] shrink-0 border-l border-r border-[#8f959d]">
      <div className="flex h-[21px] border-b border-[#8f959d]">
        <div className="flex w-[159px] items-center bg-white">
          <div className="w-[140px] pt-[2px] text-center">D2</div>
          <Icon w={7} h={4} className="ml-[6px]"><path d="M0 0h7L3.500 4z" fill="#333" /></Icon>
        </div>
        <div className="flex flex-1 items-center rounded-l-full border-l border-[#a3a8af] pl-[5px]">
          <div className="h-[8px] w-[9px] rounded-full bg-linear-to-b from-[#b6babf] to-white" />
          <div className="ml-auto pr-[7px] font-['Liberation_Serif',serif] text-[15px] font-bold italic text-[#333]">
            f<span className="text-[11px]">x</span>
          </div>
        </div>
      </div>
    </div>
    <div className="flex-1 bg-white pl-[8px] leading-[21px]">2017-05-01</div>
    <div className="flex w-[16px] flex-col items-center border-l border-[#a9aeb6]">
      <div className="flex h-[20px] w-full items-center justify-center border-b border-[#a9aeb6] bg-[#eceef1]">
        <Icon w={7} h={5}><path d="M.500 4L3.500 1l3 3" fill="none" stroke="#444" strokeWidth="1.800" /></Icon>
      </div>
      <Icon w={9} h={16} className="mt-[2px]"><path d="M0 5h9L4.500 0zM0 10.500h9L4.500 15.500z" fill="#8b9595" /></Icon>
    </div>
  </div>
);

const ScrollBar = () => (
  <div className="flex w-[20px] shrink-0 bg-[#c9ced5]">
    <div className="flex w-[17px] flex-col border-r border-[#7f8b99] bg-[#e4e7eb]">
      <div className="ml-px flex h-[8px] w-[15px] items-center justify-center border border-[#7f868f] bg-white">
        <div className="h-[3px] w-[9px] border border-[#8d939b]" />
      </div>
      <div className="flex h-[17px] w-[15px] items-center justify-center bg-[#e9ebee]">
        <Icon w={9} h={5}><path d="M0 5h9L4.500 0z" fill="#444" /></Icon>
      </div>
      <div className="flex w-[15px] flex-1 justify-center rounded-t-[1px] border border-b-0 border-[#7f8b99] bg-linear-to-r from-[#f4f6f9] to-[#d5dae2] pt-[346px]">
        <Icon w={8} h={8}><path d="M0 .500h8M0 2.500h8M0 4.500h8M0 6.500h8" stroke="#858b94" /></Icon>
      </div>
    </div>
  </div>
);

export default function App() {
  return (
    <div className="relative flex h-[624px] w-[1280px] flex-col overflow-hidden bg-white font-['Open_Sans',sans-serif] text-[11px]">
      <TitleBar />
      <TabBar />
      <Ribbon />
      <div className="h-[3px] border-t border-[#8c929b] bg-[#ccd1d9]" />
      <FormulaBar />
      <div className="h-[4px] border-b border-[#7d838c] bg-[#eff1f4]" />
      <div className="flex min-h-0 flex-1">
        <Sheet />
        <ScrollBar />
      </div>
      <Steps />
      <FormatMenu />
    </div>
  );
}
